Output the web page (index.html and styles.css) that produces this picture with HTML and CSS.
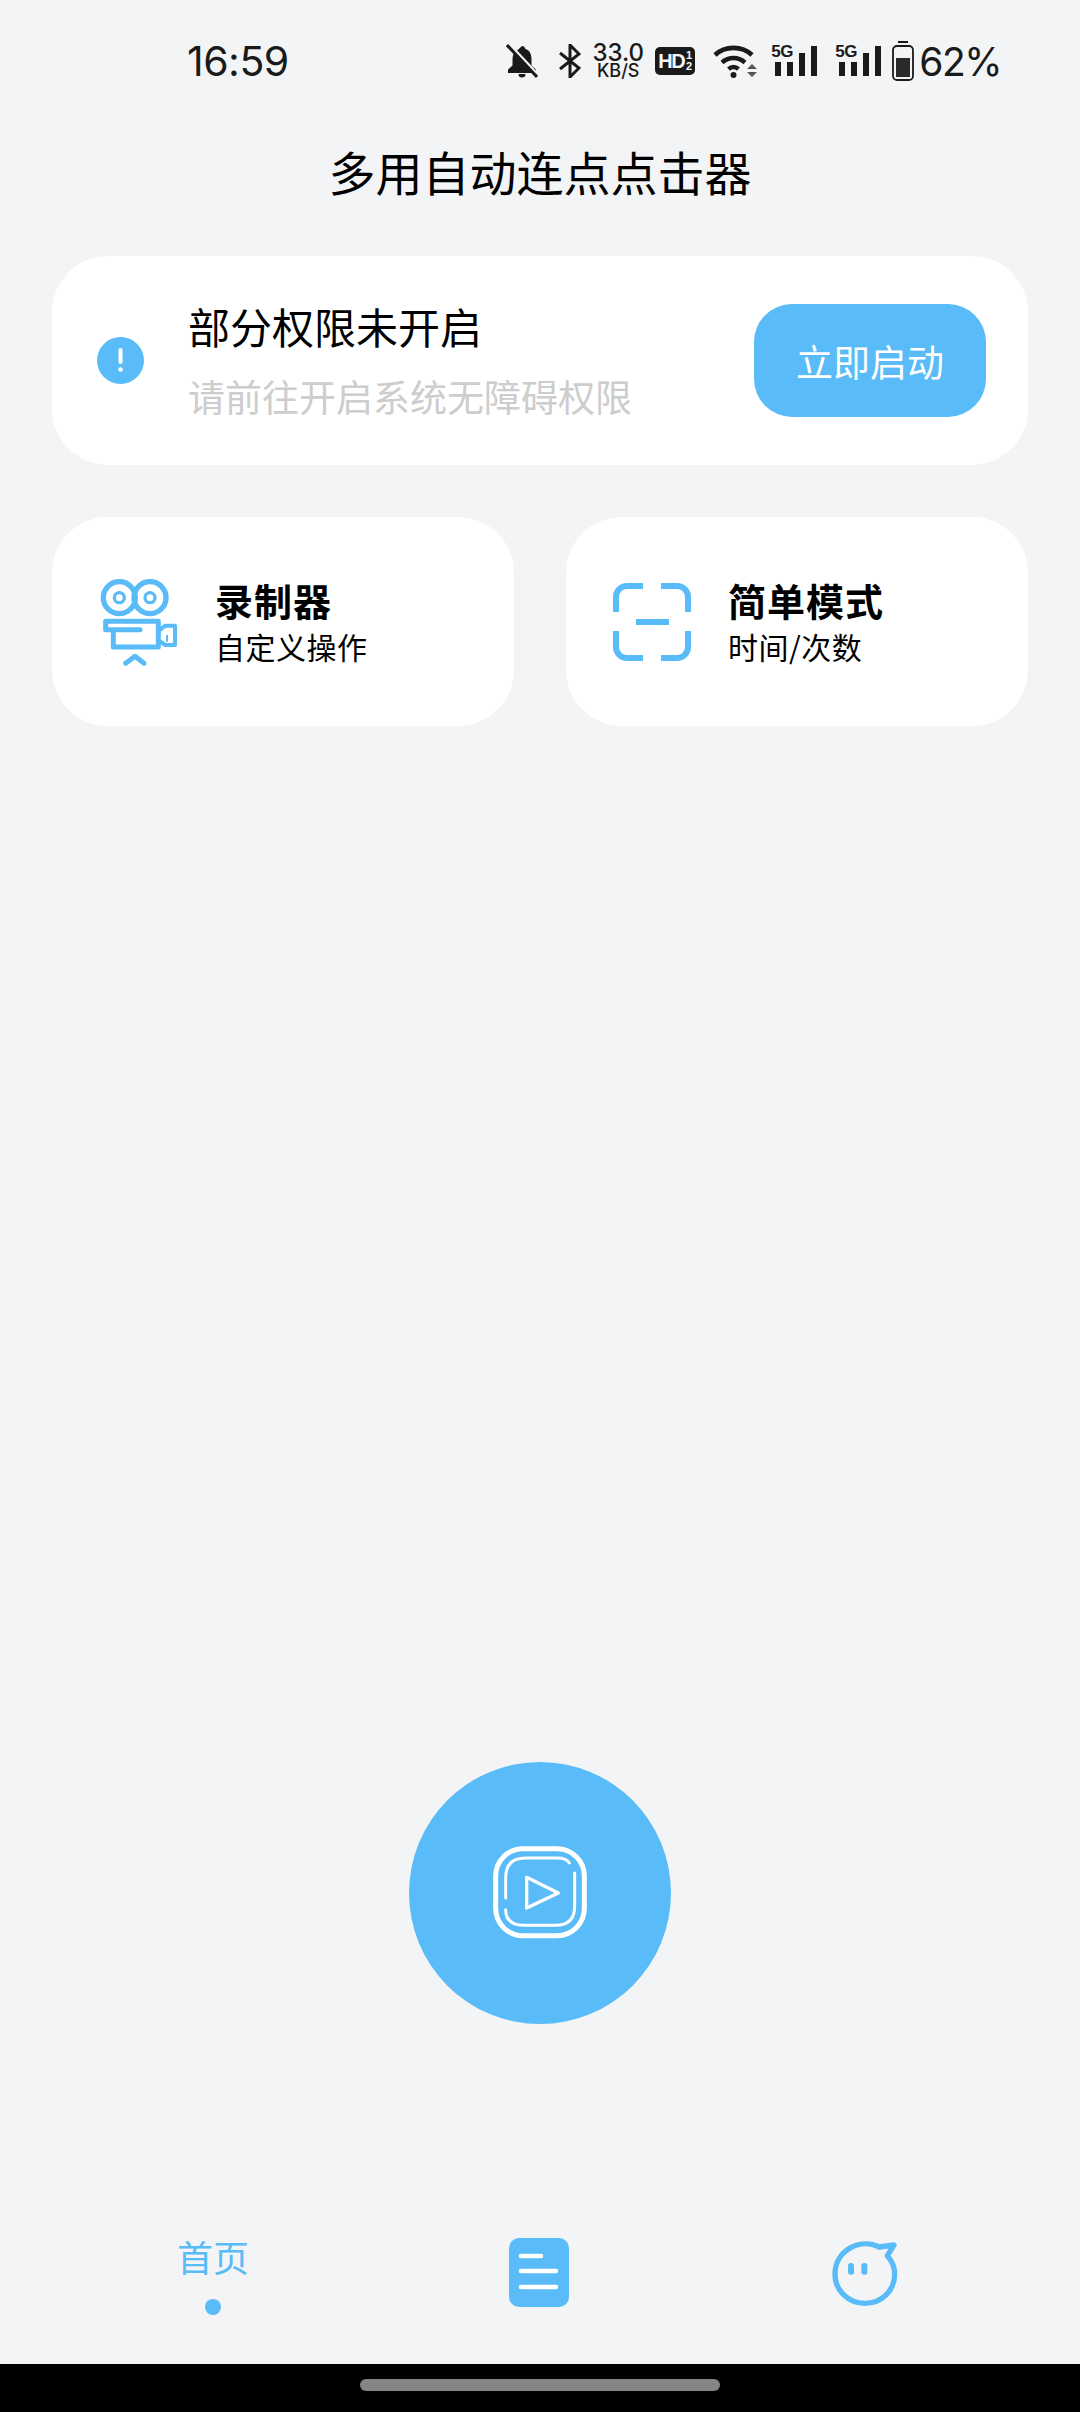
FILE: index.html
```html
<!DOCTYPE html>
<html lang="zh">
<head>
<meta charset="utf-8">
<title>多用自动连点点击器</title>
<link rel="stylesheet" href="styles.css">
</head>
<body>
<header class="status">
  <span class="clock">16:59</span>
  <div class="status-icons">
    <svg class="i-bell" viewBox="0 0 32 34"><path d="M16 2c1.800 0 3 1.200 3.300 2.800C23.500 6.200 25.500 10 25.500 15v6.500l4.500 4V29H2v-3.500l4.500-4V15c0-2 .4-3.800 1.200-5.300z" fill="#1a1a1a"/><path d="M12.500 30h7a3.500 3.500 0 0 1-7 0z" fill="#1a1a1a"/><path d="M3 0l30 32" stroke="#f3f4f6" stroke-width="3"/><path d="M1 1l30 32" stroke="#1a1a1a" stroke-width="3"/></svg>
    <svg class="i-bt" viewBox="0 0 22 34"><path d="M1 9l19 15-9 9V1l9 9L1 25" fill="none" stroke="#1a1a1a" stroke-width="3"/></svg>
    <div class="speed"><span class="speed-num">33.0</span><span class="speed-unit">KB/S</span></div>
    <div class="hd"><span class="hd-main">HD</span><span class="hd-frac"><span>1</span><span>2</span></span></div>
    <svg class="i-wifi" viewBox="0 0 44 34"><g fill="none" stroke="#1a1a1a" stroke-width="4.600"><path d="M2 11C12 1.500 29 1.500 39 11"/><path d="M9 18.500c7-6 16-6 23 0"/><path d="M15.500 25c3.500-2.800 6.500-2.800 10 0"/></g><circle cx="20.500" cy="31" r="3" fill="#1a1a1a"/><path d="M34 25l5-5 5 5zM34 28l5 5 5-5z" fill="#555"/></svg>
    <div class="signal"><span class="sig-label">5G</span><svg viewBox="0 0 47 32"><path d="M4 16h6v14H4zM16 16h6v14h-6zM28 7h6v23h-6zM40 0h6v30h-6z" fill="#1a1a1a"/></svg></div>
    <div class="signal"><span class="sig-label">5G</span><svg viewBox="0 0 47 32"><path d="M4 16h6v14H4zM16 16h6v14h-6zM28 7h6v23h-6zM40 0h6v30h-6z" fill="#1a1a1a"/></svg></div>
    <svg class="i-batt" viewBox="0 0 22 40"><path d="M6 1h10" stroke="#1a1a1a" stroke-width="2"/><rect x="1" y="5" width="20" height="34" rx="4" fill="none" stroke="#1a1a1a" stroke-width="1.800"/><rect x="4" y="17" width="14" height="19" fill="#2a2a2a"/></svg>
    <span class="batt-pct">62%</span>
  </div>
</header>

<h1 class="app-title">多用自动连点点击器</h1>

<section class="alert-card">
  <svg class="i-alert" viewBox="0 0 47 47"><circle cx="23.500" cy="23.500" r="23.500" fill="#59bbf7"/><path d="M23.500 13v12" stroke="#fff" stroke-width="4" stroke-linecap="round"/><circle cx="23.500" cy="32.500" r="2.300" fill="#fff"/></svg>
  <div class="alert-text">
    <div class="alert-title">部分权限未开启</div>
    <div class="alert-sub">请前往开启系统无障碍权限</div>
  </div>
  <button class="start-btn">立即启动</button>
</section>

<section class="shortcuts">
  <div class="shortcut">
    <svg class="i-rec" viewBox="108 102 252 282"><g fill="none" stroke="#59bbf7"><circle cx="178" cy="170" r="48" stroke-width="16"/><circle cx="270" cy="170" r="48" stroke-width="16"/><circle cx="178" cy="170" r="15" stroke-width="10"/><circle cx="270" cy="170" r="15" stroke-width="10"/><path d="M240 266H137V241H295V318H160V270" stroke-width="15" stroke-linejoin="round" stroke-linecap="round"/><path d="M298 268l18-14h29v58h-29l-18-12" stroke-width="12" stroke-linejoin="round"/><path d="M321 282v20" stroke-width="6"/><path d="M197 367l28-21 27 21" stroke-width="15" stroke-linecap="round" stroke-linejoin="round"/></g></svg>
    <div class="sc-text"><div class="sc-title">录制器</div><div class="sc-sub">自定义操作</div></div>
  </div>
  <div class="shortcut scan">
    <svg class="i-scan" viewBox="0 0 78 78"><g fill="none" stroke="#59bbf7" stroke-width="6"><path d="M30 3H14A11 11 0 0 0 3 14V29"/><path d="M48 3H64A11 11 0 0 1 75 14V29"/><path d="M30 75H14A11 11 0 0 1 3 64V48"/><path d="M48 75H64A11 11 0 0 0 75 64V48"/><path d="M23 39H56"/></g></svg>
    <div class="sc-text"><div class="sc-title">简单模式</div><div class="sc-sub">时间/次数</div></div>
  </div>
</section>

<button class="play-btn" aria-label="开始">
  <svg viewBox="96 106 288 288"><g fill="none" stroke="#fff" stroke-linecap="round" stroke-linejoin="round"><rect x="107" y="117" width="266" height="261" rx="82" stroke-width="15"/><path d="M137 265V205Q137 145 197 145H290Q320 145 328 160" stroke-width="9"/><path d="M344 190V290Q344 347 287 347H195Q137 347 137 300" stroke-width="9"/><path d="M200 203L295 250 200 295Z" stroke-width="10"/></g></svg>
</button>

<nav class="tabs">
  <div class="tab tab-home"><span class="tab-label">首页</span><span class="tab-dot"></span></div>
  <div class="tab">
    <svg class="i-doc" viewBox="0 0 60 69"><rect width="60" height="69" rx="10" fill="#59bbf7"/><g stroke="#fff" stroke-width="4.600" stroke-linecap="round"><path d="M12 18H32M12 33H47M12 49H47"/></g></svg>
  </div>
  <div class="tab">
    <svg class="i-face" viewBox="90 50 210 210"><path d="M238 74C180 45 105 85 105 155C105 205 145 243 195 243C245 243 284 205 284 155C284 135 275 115 262 100L282 68Z" fill="none" stroke="#59bbf7" stroke-width="16" stroke-linejoin="round"/><rect x="144" y="122" width="18" height="35" rx="8" fill="#59bbf7"/><rect x="184" y="122" width="18" height="35" rx="8" fill="#59bbf7"/></svg>
  </div>
</nav>

<footer class="gesture"><span class="handle"></span></footer>
</body>
</html>
```
FILE: styles.css
```css
* { box-sizing: border-box; }
html, body { margin: 0; padding: 0; }
body {
  width: 1080px;
  height: 2412px;
  background: #f3f4f6;
  display: flex;
  flex-direction: column;
  overflow: hidden;
  font-family: "Noto Sans CJK SC", "Noto Sans", sans-serif;
  color: #000;
}

/* status bar */
.status {
  height: 122px;
  flex: none;
  display: flex;
  align-items: center;
  justify-content: space-between;
  padding: 0 79px 0 187px;
  color: #1a1a1a;
  font-family: Inter, Roboto, sans-serif;
}
.clock { font-size: 41px; letter-spacing: -0.5px; }
.status-icons { display: flex; align-items: center; }
.status-icons svg { display: block; flex: none; }
.i-bell { width: 32px; height: 34px; }
.i-bt { width: 22px; height: 34px; margin-left: 21px; }
.speed { margin-left: 13px; width: 48px; display: flex; flex-direction: column; align-items: center; }
.speed-num { font-size: 24px; line-height: 20px; font-weight: 500; }
.speed-unit { font-size: 18px; line-height: 16px; font-weight: 500; }
.hd {
  margin-left: 13px;
  width: 40px;
  height: 28px;
  border-radius: 5px;
  background: #1a1a1a;
  color: #f3f4f6;
  display: flex;
  align-items: center;
  justify-content: center;
  font-family: "Liberation Sans", sans-serif;
  font-weight: 700;
}
.hd-main { font-size: 20px; letter-spacing: -1.5px; }
.hd-frac { display: flex; flex-direction: column; font-size: 11px; line-height: 11px; margin-left: 2px; }
.i-wifi { width: 44px; height: 34px; margin-left: 18px; }
.signal { margin-left: 14px; width: 47px; height: 34px; position: relative; }
.signal + .signal { margin-left: 17px; }
.signal svg { width: 47px; height: 32px; position: absolute; left: 0; top: 2px; }
.sig-label {
  position: absolute;
  left: 0;
  top: -1px;
  font-family: "Liberation Sans", sans-serif;
  font-size: 17px;
  line-height: 17px;
  font-weight: 700;
  letter-spacing: -0.5px;
}
.i-batt { width: 22px; height: 40px; margin-left: 10px; }
.batt-pct { font-size: 39px; margin-left: 5px; letter-spacing: -1.5px; }

/* title */
.app-title {
  margin: 0;
  height: 108px;
  flex: none;
  text-align: center;
  font-size: 47px;
  font-weight: 400;
  line-height: 98px;
}

/* alert card */
.alert-card {
  flex: none;
  height: 209px;
  margin: 26px 52px 0;
  padding: 0 42px 0 45px;
  background: #fff;
  border-radius: 56px;
  display: flex;
  align-items: center;
}
.i-alert { width: 47px; height: 47px; flex: none; }
.alert-text { margin-left: 44px; flex: 1; }
.alert-title { font-size: 42px; line-height: 60px; font-weight: 400; }
.alert-sub { font-size: 37px; line-height: 60px; margin-top: 10px; color: #cdcdcd; font-weight: 400; }
.start-btn {
  width: 232px;
  height: 113px;
  flex: none;
  border: 0;
  border-radius: 38px;
  background: #59bbf7;
  color: #fff;
  font-family: inherit;
  font-size: 37px;
  font-weight: 400;
  padding: 0;
}

/* shortcuts */
.shortcuts {
  flex: none;
  display: grid;
  grid-template-columns: 462px 462px;
  gap: 52px;
  margin: 52px 52px 0;
}
.shortcut {
  height: 209px;
  background: #fff;
  border-radius: 56px;
  display: flex;
  align-items: center;
  padding-left: 44px;
}
.shortcut.scan { padding-left: 47px; }
.i-rec { width: 84px; height: 94px; flex: none; }
.i-scan { width: 78px; height: 78px; flex: none; }
.sc-text { margin-left: 35px; }
.scan .sc-text { margin-left: 37px; }
.sc-title { font-size: 38px; line-height: 48px; font-weight: 700; letter-spacing: 1px; }
.sc-sub { font-size: 30px; line-height: 44px; font-weight: 400; letter-spacing: 0.5px; }

/* play */
.play-btn {
  flex: none;
  width: 262px;
  height: 262px;
  margin: 1036px auto 0;
  border: 0;
  border-radius: 50%;
  background: #59bbf7;
  padding: 0;
  display: flex;
  align-items: center;
  justify-content: center;
}
.play-btn svg { width: 96px; height: 96px; display: block; }

/* tab bar */
.tabs {
  flex: none;
  margin-top: auto;
  height: 130px;
  padding: 0 50px;
  display: grid;
  grid-template-columns: repeat(3, 326px);
}
.tab { display: flex; flex-direction: column; align-items: center; padding-top: 3px; }
.tab-label { font-size: 36px; line-height: 50px; color: #59bbf7; font-weight: 400; margin-top: -6px; }
.tab-dot { width: 16px; height: 16px; border-radius: 50%; background: #59bbf7; margin-top: 18px; }
.i-doc { width: 60px; height: 69px; margin-top: 1px; }
.i-face { width: 70px; height: 70px; margin-top: 2px; }

/* gesture bar */
.gesture {
  flex: none;
  height: 48px;
  background: #000;
  display: flex;
  justify-content: center;
  padding-top: 15px;
}
.handle { width: 360px; height: 12px; border-radius: 6px; background: #858585; }
```
